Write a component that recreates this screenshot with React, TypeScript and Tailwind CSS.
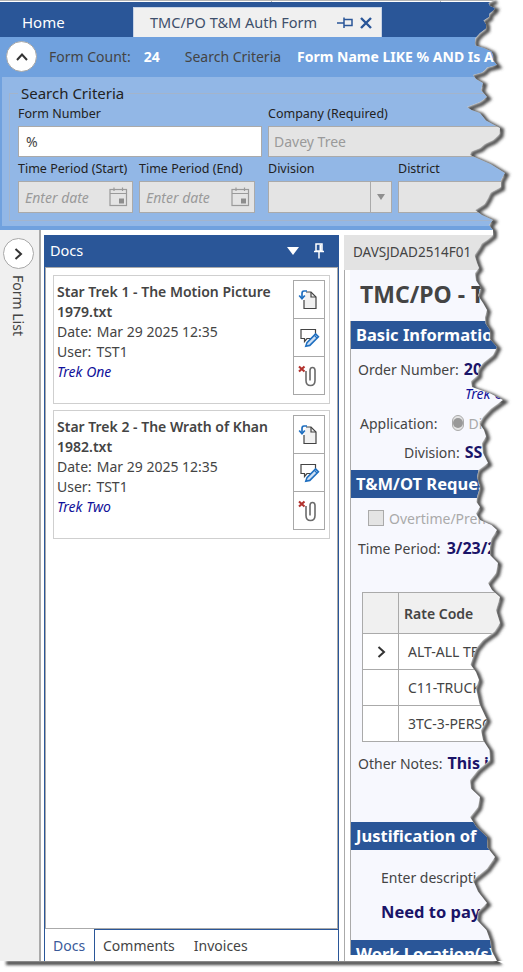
const EDGE: [number, number][] = [
  [495, 0], [490, 6], [494, 10], [489, 17], [486, 24], [480, 33], [475, 43], [484, 48], [493, 55], [497, 65], [485, 70],
  [473, 75], [483, 83], [487, 97], [467, 107], [480, 113], [500, 128], [493, 140], [480, 148], [470, 155], [505, 173],
  [501, 187], [488, 198], [475, 210], [493, 220], [493, 230], [487, 240], [480, 247], [477, 263], [475, 273], [481, 288],
  [483, 303], [485, 317], [490, 330], [497, 347], [483, 363], [478, 375], [472, 387], [503, 400], [483, 417], [484, 430],
  [482, 443], [488, 463], [477, 477], [477, 497], [480, 507], [480, 520], [497, 530], [490, 547], [498, 563], [488, 583],
  [500, 597], [500, 623], [483, 640], [473, 657], [476, 672], [476, 688], [487, 720], [483, 740], [490, 760], [470, 780],
  [480, 797], [470, 817], [487, 837], [495, 857], [473, 880], [487, 903], [477, 920], [490, 940], [497, 961],
];

// small teeth between the main points, the tear is never a clean line
const edgeLine = EDGE.flatMap(([x, y], i) => {
  const next = EDGE[i + 1];
  if (!next) return [`${x},${y}`];
  const offset = i % 3 === 0 ? -4 : i % 3 === 1 ? 3 : -2;
  return [`${x},${y}`, `${(x + next[0]) / 2 + offset},${(y + next[1]) / 2}`];
}).join(" ");

function TornEdge() {
  return (
    <svg className="absolute left-0 top-0 h-[972px] w-[523px]" viewBox="0 0 523 972">
      <defs>
        <filter id="tear-blur" x="-5%" y="-5%" width="110%" height="110%">
          <feGaussianBlur stdDeviation="1.4" />
        </filter>
        <clipPath id="tear-clip">
          <polygon points={`${edgeLine} 523,972 0,972 0,961 497,961 523,961 523,0`} />
        </clipPath>
      </defs>
      <polygon points={`${edgeLine} 523,961 523,0`} fill="#ffffff" />
      <rect x="0" y="961" width="523" height="11" fill="#ffffff" />
      <g clipPath="url(#tear-clip)">
        <polyline
          points={`${edgeLine} 4,961`}
          fill="none"
          stroke="#444444"
          strokeWidth="4"
          filter="url(#tear-blur)"
          transform="translate(2 2)"
        />
      </g>
    </svg>
  );
}

function Chevron({ up }: { up?: boolean }) {
  return (
    <svg width="14" height="14" viewBox="0 0 14 14" fill="none" stroke="#333" strokeWidth="2">
      {up ? <path d="M2 10 L7 4.5 L12 10" /> : <path d="M4.5 2 L10 7 L4.5 12" />}
    </svg>
  );
}

function CalendarIcon() {
  return (
    <svg width="19" height="20" viewBox="0 0 19 20" fill="none" stroke="#9a9a9a" strokeWidth="1.2">
      <rect x="1" y="2.5" width="16.5" height="16" />
      <path d="M1 6.5 H17.5 M5 0.5 V4 M13.5 0.5 V4" />
      <rect x="10" y="11.5" width="5" height="5" fill="#8d8d8d" stroke="none" />
    </svg>
  );
}

function DocIcon() {
  return (
    <svg width="22" height="22" viewBox="0 0 22 22" fill="none">
      <path d="M8 3 H13 L18 8 V19.5 H6 V11" fill="#f1f1f1" stroke="#444" strokeWidth="1.2" />
      <path d="M13 3 V8 H18" stroke="#444" strokeWidth="1.2" />
      <path d="M9 2 H6 Q4 2 4 4.5 V9" stroke="#1f6fc0" strokeWidth="1.7" />
      <path d="M1.2 6.5 L4 9.8 L6.8 6.5" stroke="#1f6fc0" strokeWidth="1.7" />
    </svg>
  );
}

function NoteIcon() {
  return (
    <svg width="20" height="20" viewBox="0 0 20 20" fill="none" className="mr-[-2px]">
      <path d="M13 10.5 H7 L4.5 13.5 V10.5 H1 V1.5 H15.5 V6" stroke="#444" strokeWidth="1.2" />
      <path d="M5.8 18.2 L7 14.6 L15.6 6 L18.4 8.8 L9.8 17.4 Z" fill="#cfe0f4" stroke="#1f6fc0" strokeWidth="1.6" />
      <path d="M14.4 7.4 L17 10" stroke="#1f6fc0" strokeWidth="1.2" />
    </svg>
  );
}

function UnclipIcon() {
  return (
    <svg width="22" height="22" viewBox="0 0 22 22" fill="none">
      <path d="M1 1.5 L6.5 6.5 M6.5 1.5 L1 6.5" stroke="#b2322e" strokeWidth="2.1" />
      <path
        d="M8 6 V15.5 Q8 20.5 12.5 20.5 Q17 20.5 17 15.5 V5.5 Q17 2.5 14.5 2.5 Q12 2.5 12 5.5 V15.5"
        stroke="#6b6b6b"
        strokeWidth="1.6"
      />
    </svg>
  );
}

function PinIcon({ color }: { color: string }) {
  return (
    <svg width="12" height="16" viewBox="0 0 12 16" fill="none" stroke={color} strokeWidth="1.5">
      <path d="M3 1 H9 V8 H3 Z M1 8.5 H11 M6 9 V15.5" />
      <path d="M7.5 1.5 V8" strokeWidth="2" />
    </svg>
  );
}

function SectionHead({ title, className }: { title: string; className?: string }) {
  return (
    <div className={`flex shrink-0 items-center whitespace-nowrap bg-[#2a5698] pl-[5px] text-[16.5px] font-bold text-white ${className ?? ""}`}>
      {title}
    </div>
  );
}

function DocCard({ title, note }: { title: string; note: string }) {
  return (
    <div className="flex h-[129px] border border-[#cfcfcf] pl-[3px] pt-[6px]">
      <div className="w-[236px] text-[14px] leading-[20px] text-[#444]">
        <div className="font-semibold">{title}</div>
        <div className="flex gap-[5px]">
          <span>Date:</span>
          <span>Mar 29 2025 12:35</span>
        </div>
        <div className="flex gap-[5px]">
          <span>User:</span>
          <span>TST1</span>
        </div>
        <div className="italic text-[#10109a]">{note}</div>
      </div>
      <div className="-mt-[2px] flex flex-col">
        <button className="-mb-px flex h-[39px] w-[32px] items-center justify-center border border-[#a8a8a8] bg-white"><DocIcon /></button>
        <button className="-mb-px flex h-[39px] w-[32px] items-center justify-center border border-[#a8a8a8] bg-white"><NoteIcon /></button>
        <button className="flex h-[39px] w-[32px] items-center justify-center border border-[#a8a8a8] bg-white"><UnclipIcon /></button>
      </div>
    </div>
  );
}

function RateRow({ code, current }: { code: string; current?: boolean }) {
  return (
    <div className="flex h-[36px] border-b border-[#aaa] bg-white">
      <div className="flex w-[36px] items-center justify-center border-r border-[#aaa]">
        {current && <Chevron />}
      </div>
      <div className="flex items-center whitespace-nowrap pl-[9px] text-[14px] text-[#444]">{code}</div>
    </div>
  );
}

export default function App() {
  return (
    <div className="relative h-[972px] w-[523px] overflow-hidden bg-white font-['Noto_Sans',sans-serif]">
      <div className="flex h-[961px] w-[523px] flex-col overflow-hidden">
        {/* window chrome strip */}
        <div className="flex h-[2px] shrink-0 border-t border-[#b4b4b4]">
          <div className="w-[272px] border-r border-[#b4b4b4]" />
          <div className="w-[169px] border-r border-[#b4b4b4]" />
        </div>

        {/* tabs */}
        <div className="flex h-[35px] shrink-0 items-end bg-[#2a5698]">
          <div className="flex h-[30px] w-[133px] items-center pl-[22px] text-[15px] text-white">Home</div>
          <div className="flex h-[30px] w-[249px] items-center border-x border-t border-[#c7d3e6] bg-[#f0f0f0] pl-[16px] text-[14.5px] text-[#3e4f6b]">
            <span className="w-[187px] whitespace-nowrap">TMC/PO T&amp;M Auth Form</span>
            <svg width="16" height="12" viewBox="0 0 16 12" fill="none" stroke="#2a5698" strokeWidth="1.5">
              <path d="M0 6 H7 M7 0.5 V11 M7 2.5 H15 V8.5 H7" />
            </svg>
            <svg className="ml-[7px]" width="12" height="12" viewBox="0 0 12 12" fill="none" stroke="#2a5698" strokeWidth="2.4">
              <path d="M1 1 L11 11 M11 1 L1 11" />
            </svg>
          </div>
        </div>

        {/* collapsed summary bar */}
        <div className="flex h-[40px] shrink-0 items-center whitespace-nowrap bg-[#70a1de] pb-[1px] pl-[6px] text-[14px] text-[#444]">
          <div className="flex h-[31px] w-[31px] items-center justify-center rounded-full border border-[#a8a8a8] bg-white"><Chevron up /></div>
          <span className="ml-[12px]">Form Count:</span>
          <span className="ml-[13px] font-bold text-white">24</span>
          <span className="ml-[25px]">Search Criteria</span>
          <span className="ml-[16px] font-bold text-white">Form Name LIKE % AND Is Acti</span>
        </div>

        {/* search panel */}
        <div className="h-[153px] w-[540px] shrink-0 bg-[#70a1de] pb-[4px] pl-[2px]">
          <div className="h-[149px] bg-[#92b7e6] pl-[7px] pt-[6px]">
            <fieldset className="h-[138px] border border-[#a3b4cb] pl-[8px]">
              <legend className="px-[3px] text-[15px] leading-[20px] text-[#222]">Search Criteria</legend>
              <div className="flex gap-[6px] pt-[2px]">
                <div className="w-[244px]">
                  <div className="h-[21px] text-[12.5px] leading-[18px] text-[#222]">Form Number</div>
                  <div className="flex h-[31px] items-center border border-[#aaa] bg-white pl-[7px] text-[14px] text-[#444]">%</div>
                </div>
                <div className="w-[300px]">
                  <div className="h-[21px] text-[12.5px] leading-[18px] text-[#222]">Company (Required)</div>
                  <div className="flex h-[31px] items-center border border-[#aaa] bg-[#e4e4e4] pl-[5px] text-[14px] text-[#9a9a9a]">Davey Tree</div>
                </div>
              </div>
              <div className="mt-[3px] flex">
                <div className="w-[115px]">
                  <div className="h-[21px] whitespace-nowrap text-[12.5px] leading-[18px] text-[#222]">Time Period (Start)</div>
                  <div className="flex h-[32px] items-center justify-between border border-[#aaa] bg-[#e4e4e4] pl-[6px] pr-[4px] text-[14px] italic text-[#9a9a9a]">
                    Enter date <CalendarIcon />
                  </div>
                </div>
                <div className="ml-[6px] w-[116px]">
                  <div className="h-[21px] whitespace-nowrap text-[12.5px] leading-[18px] text-[#222]">Time Period (End)</div>
                  <div className="flex h-[32px] items-center justify-between border border-[#aaa] bg-[#e4e4e4] pl-[6px] pr-[4px] text-[14px] italic text-[#9a9a9a]">
                    Enter date <CalendarIcon />
                  </div>
                </div>
                <div className="ml-[13px] w-[124px]">
                  <div className="h-[21px] text-[12.5px] leading-[18px] text-[#222]">Division</div>
                  <div className="flex h-[32px] justify-end border border-[#aaa] bg-[#e4e4e4]">
                    <div className="flex w-[21px] items-center justify-center border-l border-[#aaa]">
                      <div className="h-0 w-0 border-x-[4px] border-t-[6px] border-x-transparent border-t-[#8f8f8f]" />
                    </div>
                  </div>
                </div>
                <div className="ml-[6px] w-[150px]">
                  <div className="h-[21px] text-[12.5px] leading-[18px] text-[#222]">District</div>
                  <div className="h-[32px] border border-[#aaa] bg-[#e4e4e4]" />
                </div>
              </div>
            </fieldset>
          </div>
        </div>

        {/* main area */}
        <div className="flex min-h-0 flex-1">
          <div className="flex w-[41px] shrink-0 flex-col items-center border-r-2 border-[#aaa] bg-[#f0f0f0] pr-[3px] pt-[8px]">
            <div className="flex h-[31px] w-[31px] items-center justify-center rounded-full border border-[#a8a8a8] bg-white"><Chevron /></div>
            <div className="mt-[6px] text-[14px] leading-[18px] text-[#444] [writing-mode:vertical-rl]">Form List</div>
          </div>

          {/* docs panel */}
          <div className="ml-[3px] mt-[5px] flex w-[295px] shrink-0 flex-col border-x border-[#2a5698]">
            <div className="flex h-[32px] shrink-0 items-center justify-between bg-[#2a5698] pl-[5px] pr-[13px] text-[14.5px] text-white">
              <span>Docs</span>
              <div className="flex items-center gap-[14px]">
                <div className="h-0 w-0 border-x-[6px] border-t-[8px] border-x-transparent border-t-white" />
                <PinIcon color="#ffffff" />
              </div>
            </div>
            <div className="flex flex-1 flex-col gap-[6px] border border-[#aaa] px-[7px] pt-[7px]">
              <DocCard title="Star Trek 1 - The Motion Picture 1979.txt" note="Trek One" />
              <DocCard title="Star Trek 2 - The Wrath of Khan 1982.txt" note="Trek Two" />
            </div>
            <div className="flex h-[32px] shrink-0 items-center text-[14px] text-[#444]">
              <div className="flex h-full w-[50px] items-center border-r border-[#2a5698] pl-[8px] text-[#3a5a9a]">Docs</div>
              <div className="flex h-full flex-1 items-center gap-[19px] border-t border-[#2a5698] pl-[8px]">
                <span>Comments</span>
                <span>Invoices</span>
              </div>
            </div>
          </div>

          {/* form preview */}
          <div className="ml-[5px] mt-[5px] flex w-[200px] shrink-0 flex-col overflow-hidden">
            <div className="flex h-[35px] shrink-0 items-center whitespace-nowrap bg-[#e3e3e3] pl-[9px] text-[13.5px] text-[#444]">DAVSJDAD2514F01</div>
            <div className="flex min-h-0 flex-1 border-l border-[#aaa] bg-white pb-[6px] pl-[5px]">
              <div className="flex w-full flex-col whitespace-nowrap bg-[#f7f8fe] text-[14px] text-[#444]">
                <div className="h-[51px] shrink-0 pl-[10px] pt-[6px] text-[23px] font-bold leading-[36px]">TMC/PO - T&amp;M Auth</div>
                <div className="flex min-h-0 flex-1 flex-col overflow-hidden border-l border-[#aaa]">
                  <SectionHead title="Basic Information" className="h-[28px]" />
                  <div className="mt-[8px] flex h-[24px] shrink-0 items-center pl-[7px]">
                    Order Number:
                    <span className="ml-[5px] text-[16px] font-bold text-[#1a1468]">20250329</span>
                  </div>
                  <div className="mt-[4px] h-[18px] shrink-0 pl-[114px] text-[14px] italic leading-[18px] text-[#10109a]">Trek One</div>
                  <div className="mt-[9px] flex h-[22px] shrink-0 items-center pl-[9px]">
                    Application:
                    <span className="ml-[14px] flex h-[16px] w-[16px] items-center justify-center rounded-full border border-[#aaa] bg-[#e4e4e4]">
                      <span className="h-[10px] w-[10px] rounded-full bg-[#999]" />
                    </span>
                    <span className="ml-[5px] text-[#aaa]">Distribution</span>
                  </div>
                  <div className="mt-[7px] flex h-[22px] shrink-0 items-center pl-[53px]">
                    Division:
                    <span className="ml-[5px] text-[16px] font-bold text-[#1a1468]">SS</span>
                  </div>
                  <SectionHead title="T&M/OT Request" className="mt-[7px] h-[28px]" />
                  <div className="mt-[10px] flex h-[20px] shrink-0 items-center pl-[17px] text-[#aaa]">
                    <span className="h-[16px] w-[16px] border border-[#aaa] bg-[#e4e4e4]" />
                    <span className="ml-[5px]">Overtime/Premium</span>
                  </div>
                  <div className="mt-[10px] flex h-[20px] shrink-0 items-center pl-[7px]">
                    Time Period:
                    <span className="ml-[6px] text-[16px] font-bold text-[#1a1468]">3/23/2025</span>
                  </div>
                  <div className="ml-[11px] mt-[34px] w-[170px] shrink-0 border-l border-t border-[#aaa]">
                    <div className="flex h-[41px] border-b border-[#aaa] bg-[#f0f0f0]">
                      <div className="w-[36px] border-r border-[#aaa]" />
                      <div className="flex items-center pl-[5px] font-semibold">Rate Code</div>
                    </div>
                    <RateRow code="ALT-ALL TERRAIN" current />
                    <RateRow code="C11-TRUCK" />
                    <RateRow code="3TC-3-PERSON" />
                  </div>
                  <div className="mt-[10px] flex h-[22px] shrink-0 items-center pl-[7px]">
                    Other Notes:
                    <span className="ml-[5px] text-[16px] font-bold text-[#1a1468]">This is</span>
                  </div>
                  <SectionHead title="Justification of" className="mt-[48px] h-[28px]" />
                  <div className="mt-[18px] h-[20px] shrink-0 pl-[30px] leading-[20px]">Enter description</div>
                  <div className="mt-[13px] h-[22px] shrink-0 pl-[30px] text-[16.5px] font-bold leading-[22px] text-[#1a1468]">Need to pay</div>
                  <SectionHead title="Work Location(s)" className="mt-[17px] h-[28px]" />
                </div>
              </div>
            </div>
          </div>
        </div>
      </div>
      <TornEdge />
    </div>
  );
}
